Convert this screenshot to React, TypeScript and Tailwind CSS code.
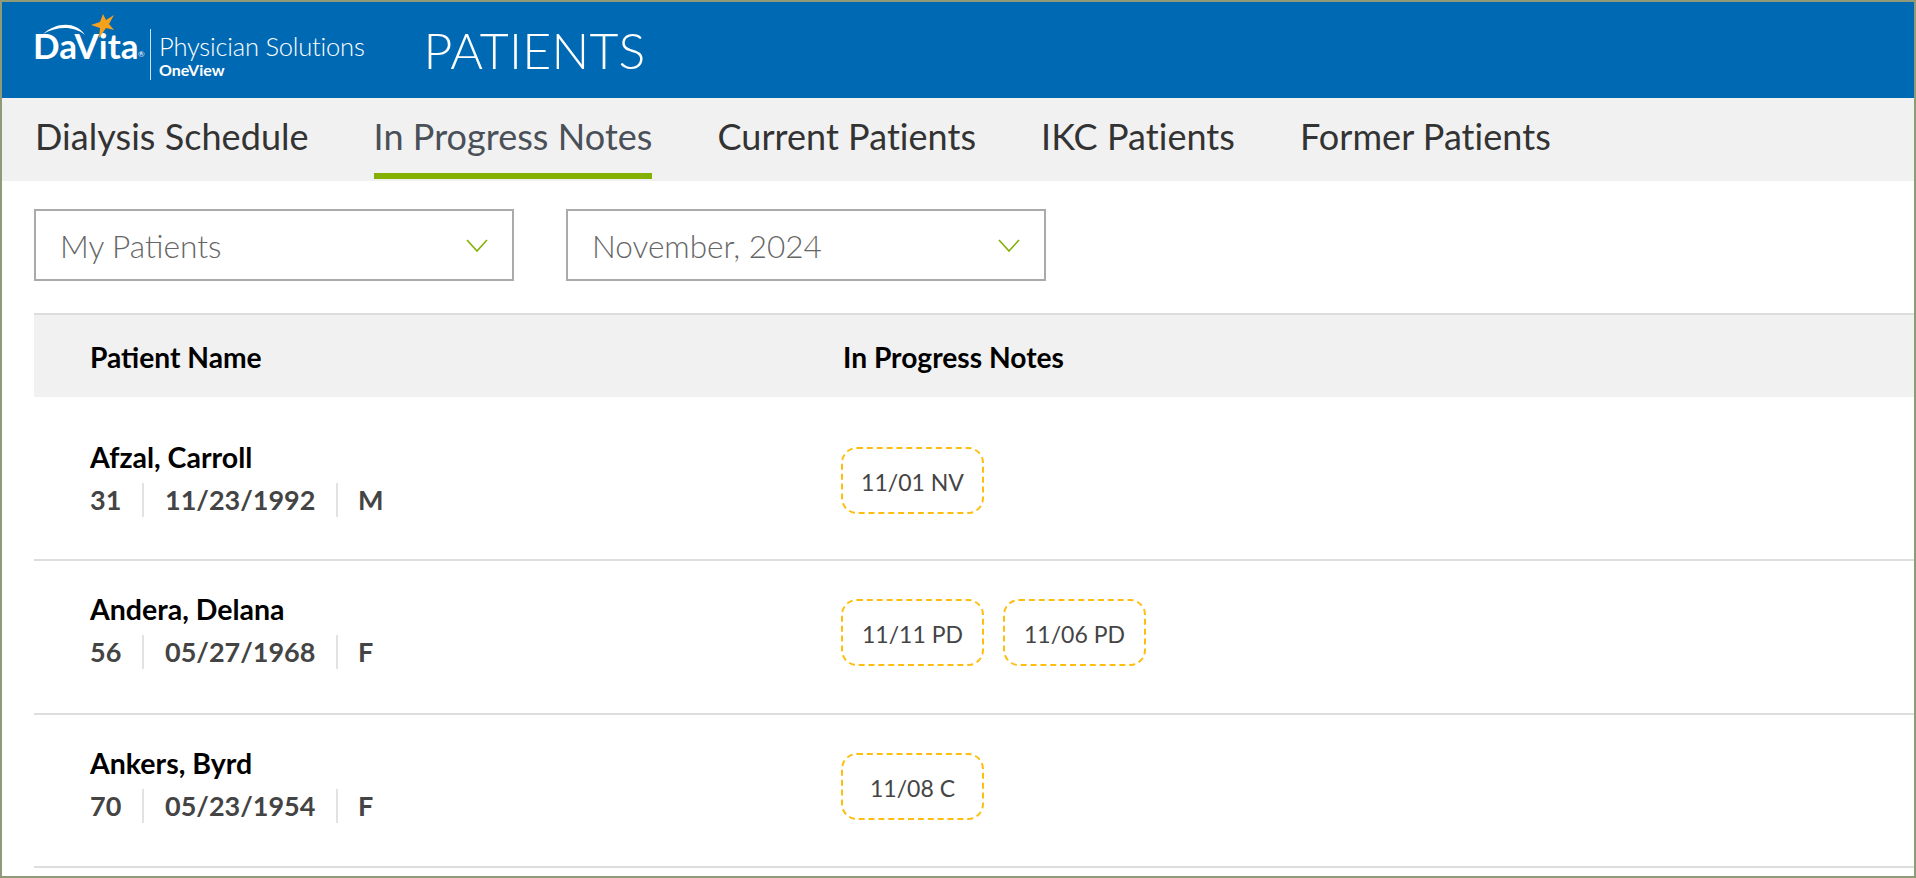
import React from 'react';

const patients = [
  { name: 'Afzal, Carroll', age: '31', dob: '11/23/1992', sex: 'M', notes: ['11/01 NV'], rowClass: 'h-[164px] pt-[12px]' },
  { name: 'Andera, Delana', age: '56', dob: '05/27/1968', sex: 'F', notes: ['11/11 PD', '11/06 PD'], rowClass: 'h-[154px]' },
  { name: 'Ankers, Byrd', age: '70', dob: '05/23/1954', sex: 'F', notes: ['11/08 C'], rowClass: 'h-[153px]' },
];

const tabs = ['Dialysis Schedule', 'In Progress Notes', 'Current Patients', 'IKC Patients', 'Former Patients'];

const Chevron = () => (
  <svg width="22" height="13" viewBox="0 0 22 13" fill="none" className="shrink-0">
    <path d="M1 1 L11 12 L21 1" stroke="#84b000" strokeWidth="1.6" />
  </svg>
);

const Logo = () => (
  <div className="flex items-center h-full">
    <div className="relative w-[116px] h-full">
      <span className="absolute left-[-1px] top-[23px] text-[35px] leading-[40px] font-bold text-white">DaVita</span>
      <span className="absolute left-[104px] top-[47px] text-[8px] leading-[10px] text-white">®</span>
      {/* swoosh and star above the wordmark */}
      <svg className="absolute left-[8px] top-[4px]" width="80" height="36" viewBox="0 0 80 36" fill="none">
        <path d="M1 28 C 14 16, 34 15, 43 29 C 32 20, 16 20, 1 28 Z" fill="#fff" />
        <path d="M61 8 L64 14 L72 9 L67 18 L72 24 L64 22 L57 32 L58 22 L49 19 L58 16 Z" fill="#f5a11c" />
      </svg>
    </div>
    <div className="w-px h-[51px] bg-white/80 mt-[9px]" />
    <div className="pl-[8px] mt-[10px] text-white">
      <div className="text-[25.5px] leading-[30px] font-light tracking-[-0.2px]">Physician Solutions</div>
      <div className="text-[16px] leading-[18px] font-bold">OneView</div>
    </div>
  </div>
);

export default function App() {
  return (
    <div className="w-[1916px] h-[878px] border-2 border-[#8f9a78] bg-white overflow-hidden font-['Lato','Liberation_Sans',sans-serif]">
      <header className="h-[96px] bg-[#0069b4] flex items-center pl-[32px]">
        <Logo />
        <h1 className="ml-[59px] text-[50px] leading-none font-light text-white tracking-[0.25px]">PATIENTS</h1>
      </header>

      <nav className="h-[83px] bg-[#f1f1f1] flex gap-[65px] pl-[33px]">
        {tabs.map((tab, i) => (
          <div
            key={tab}
            className={`h-[81px] flex items-center border-b-[6px] text-[36px] tracking-[0.05px] ${
              i === 1 ? 'border-[#84b000] text-[#4a5058]' : 'border-transparent text-[#333]'
            }`}
          >
            {tab}
          </div>
        ))}
      </nav>

      <section className="flex gap-[52px] pl-[32px] pt-[28px]">
        <div className="w-[480px] h-[72px] border-2 border-[#aaa] flex items-center justify-between pl-[24px] pr-[24px]">
          <span className="text-[31.7px] font-light text-[#666] pt-[4px]">My Patients</span>
          <Chevron />
        </div>
        <div className="w-[480px] h-[72px] border-2 border-[#aaa] flex items-center justify-between pl-[24px] pr-[24px]">
          <span className="text-[31.5px] font-light text-[#666] pt-[4px]">November, 2024</span>
          <Chevron />
        </div>
      </section>

      <section className="ml-[32px] mt-[32px]">
        <div className="h-[84px] bg-[#f1f1f1] border-t-2 border-[#ddd] flex items-center pt-[2px] text-[28.2px] font-bold text-black">
          <div className="w-[809px] pl-[56px]">Patient Name</div>
          <div>In Progress Notes</div>
        </div>

        {patients.map((p) => (
          <div key={p.name} className={`${p.rowClass} border-b-2 border-[#ddd] flex items-start`}>
            <div className="w-[807px] pl-[56px] pt-[31px]">
              <div className="text-[28.5px] leading-[34px] font-bold text-black">{p.name}</div>
              <div className="mt-[9px] flex items-center text-[27px] font-bold text-[#444] h-[34px]">
                <span className="w-[52px]">{p.age}</span>
                <span className="w-[194px] h-full border-l-2 border-[#e2e2e2] pl-[21px] flex items-center">{p.dob}</span>
                <span className="h-full border-l-2 border-[#e2e2e2] pl-[20px] flex items-center">{p.sex}</span>
              </div>
            </div>
            <div className="flex gap-[19px] pt-[38px]">
              {p.notes.map((n) => (
                <div
                  key={n}
                  className="w-[143px] h-[67px] pt-[4px] border-2 border-dashed border-[#fdbe10] rounded-[16px] flex items-center justify-center text-[23px] text-[#444]"
                >
                  {n}
                </div>
              ))}
            </div>
          </div>
        ))}
      </section>
    </div>
  );
}
